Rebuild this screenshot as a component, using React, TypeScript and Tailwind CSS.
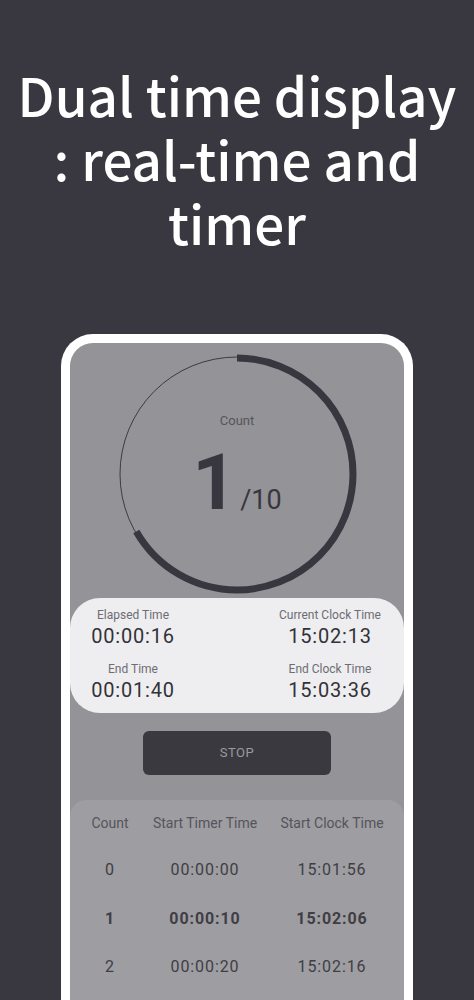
export default function App() {
  const r = 116;
  const c = 2 * Math.PI * r;
  const arc = c * (240 / 360);

  const rows = [
    { n: "0", t: "00:00:00", k: "15:01:56", bold: false },
    { n: "1", t: "00:00:10", k: "15:02:06", bold: true },
    { n: "2", t: "00:00:20", k: "15:02:16", bold: false },
  ];

  return (
    <div className="h-[1000px] w-[474px] overflow-hidden bg-[#393840]">
      <h1
        className="pt-[62px] text-center text-[53px] font-medium leading-[64px] text-white"
        style={{ fontFamily: '"Noto Sans CJK KR", "Noto Sans", sans-serif' }}
      >
        Dual time display
        <br />: real-time and
        <br />
        timer
      </h1>

      <div className="ml-[61px] mt-[80px] w-[352px] rounded-t-[32px] bg-white px-[9px] pt-[9px]">
        <div
          className="flex h-[700px] flex-col items-center rounded-t-[23px] bg-[#949398] pt-[11px]"
          style={{ fontFamily: "Roboto, 'Liberation Sans', sans-serif" }}
        >
          {/* progress ring */}
          <div className="relative flex h-[240px] w-[240px] flex-col items-center">
            <svg className="absolute inset-0" width="240" height="240" viewBox="0 0 240 240">
              <circle cx="120" cy="120" r="117" fill="none" stroke="#3c3b42" strokeWidth="1" />
              <circle
                cx="120"
                cy="120"
                r={r}
                fill="none"
                stroke="#38373f"
                strokeWidth="7"
                strokeDasharray={`${arc} ${c}`}
                transform="rotate(-90 120 120)"
              />
            </svg>
            <div className="mt-[57px] text-[13px] text-[#56555c]">Count</div>
            <div className="mt-[10px] flex items-baseline text-[#38373f]">
              <span className="text-[78px] font-bold leading-[84px]">1</span>
              <span className="ml-[3px] text-[27px]">/10</span>
            </div>
          </div>

          {/* time card */}
          <div className="mt-[4px] flex h-[115px] w-full rounded-[30px] bg-[#eeeef0] pt-[9px]">
            <div className="flex w-[126px] flex-col items-center">
              <div className="text-[12px] leading-[16px] text-[#6d6c72]">Elapsed Time</div>
              <div className="text-[20px] leading-[26px] tracking-[0.8px] text-[#333238]">00:00:16</div>
              <div className="mt-[12px] text-[12px] leading-[16px] text-[#6d6c72]">End Time</div>
              <div className="text-[20px] leading-[26px] tracking-[0.8px] text-[#333238]">00:01:40</div>
            </div>
            <div className="ml-auto flex w-[148px] flex-col items-center">
              <div className="text-[12px] leading-[16px] text-[#6d6c72]">Current Clock Time</div>
              <div className="text-[20px] leading-[26px] tracking-[0.8px] text-[#333238]">15:02:13</div>
              <div className="mt-[12px] text-[12px] leading-[16px] text-[#6d6c72]">End Clock Time</div>
              <div className="text-[20px] leading-[26px] tracking-[0.8px] text-[#333238]">15:03:36</div>
            </div>
          </div>

          {/* stop button */}
          <button className="mt-[18px] flex h-[44px] w-[188px] items-center justify-center rounded-[6px] bg-[#3a3940] text-[13px] tracking-[0.5px] text-[#9b9a9f]">
            STOP
          </button>

          {/* history table */}
          <div className="mt-[25px] w-full flex-1 rounded-t-[16px] bg-[#9e9da2] pt-[14px]">
            <div className="flex text-[14px] leading-[18px] text-[#55545a]">
              <div className="w-[80px] text-center">Count</div>
              <div className="w-[110px] text-center">Start Timer Time</div>
              <div className="w-[144px] text-center">Start Clock Time</div>
            </div>
            <div className="mt-[14px] flex flex-col">
              {rows.map((row) => (
                <div
                  key={row.n}
                  className={`flex h-[48.5px] items-center text-[16px] tracking-[0.9px] text-[#3f3e44] ${
                    row.bold ? "font-bold" : ""
                  }`}
                >
                  <div className="w-[80px] text-center">{row.n}</div>
                  <div className="w-[110px] text-center">{row.t}</div>
                  <div className="w-[144px] text-center">{row.k}</div>
                </div>
              ))}
            </div>
          </div>
        </div>
      </div>
    </div>
  );
}
